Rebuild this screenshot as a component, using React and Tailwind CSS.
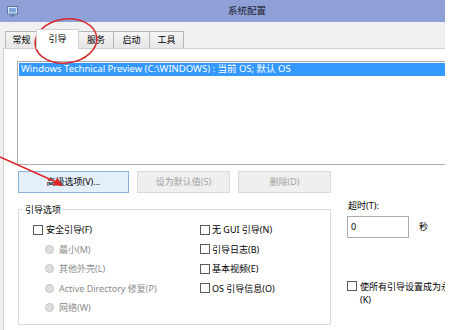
import React from "react";

const F = { fontFamily: '"Noto Sans", "Noto Sans CJK SC", sans-serif' };

function Check({ className = "" }) {
  return <div className={"w-[10px] h-[10px] border border-[#5a5a5a] bg-white shrink-0 " + className} />;
}

function Radio() {
  return <div className="w-[9px] h-[9px] rounded-full border border-[#c4c4c4] bg-[#dedede] shrink-0" />;
}

function Tab({ label, w, selected }) {
  if (selected) {
    return (
      <div
        className={`relative z-10 -mb-px h-[20px] ${w} bg-white border border-b-0 border-[#d0d0d0] flex items-start justify-center pt-[2px] text-[9px] text-black`}
      >
        {label}
      </div>
    );
  }
  return (
    <div
      className={`h-[17px] ${w} bg-gradient-to-b from-[#f5f5f5] to-[#e6e6e6] border border-b-0 border-[#b8b8b8] -ml-px flex items-center justify-center text-[9px] text-black`}
    >
      {label}
    </div>
  );
}

export default function App() {
  return (
    <div className="relative w-[450px] h-[330px] bg-white flex overflow-hidden" style={F}>
      <div className="w-[445px] h-full bg-[#f0f0f0] flex flex-col overflow-hidden shrink-0">
        {/* title bar */}
        <div className="h-[22px] bg-[#8fa0d7] flex items-center shrink-0">
          <svg width="11" height="11" viewBox="0 0 11 11" className="ml-[7px]">
            <rect x="0.5" y="0.5" width="10" height="7.5" fill="#dce8f6" stroke="#5f7aa8" />
            <rect x="2" y="2" width="7" height="4.5" fill="#7fa6d8" />
            <rect x="3.5" y="8.5" width="4" height="2" fill="#5f7aa8" />
          </svg>
          <div className="ml-[210px] text-[9.5px] text-[#1d1d2c]">系统配置</div>
        </div>
        {/* tabs */}
        <div className="h-[26px] flex items-end pl-[6px] shrink-0">
          <Tab label="常规" w="w-[33px]" />
          <Tab label="引导" w="w-[43px] -ml-[2px]" selected />
          <Tab label="服务" w="w-[36px] -ml-[1px]" />
          <Tab label="启动" w="w-[37px]" />
          <Tab label="工具" w="w-[35px]" />
        </div>
        {/* panel */}
        <div className="flex-1 bg-white border-t border-l border-[#d0d0d0] ml-[3px] pl-[13px] pt-[12px] text-[9px] text-black overflow-hidden">
          {/* list */}
          <div className="h-[104px] w-[440px] border border-[#a9abb0] bg-white pt-px pl-px">
            <div className="h-[13px] bg-[#3399ff] text-white text-[9.5px] flex items-center pl-[2px] whitespace-nowrap">
              Windows Technical Preview (C:\WINDOWS) : 当前 OS; 默认 OS
            </div>
          </div>
          {/* buttons */}
          <div className="flex mt-[6px] h-[22px]">
            <div className="w-[111px] ml-px border border-[#8db2da] bg-[#e4effa] flex items-center justify-center">
              高级选项(V)...
            </div>
            <div className="w-[93px] ml-[8px] border border-[#dadada] bg-[#efefef] text-[#a3a3a3] flex items-center justify-center">
              设为默认值(S)
            </div>
            <div className="w-[93px] ml-[8px] border border-[#dadada] bg-[#efefef] text-[#a3a3a3] flex items-center justify-center">
              删除(D)
            </div>
          </div>
          {/* lower area */}
          <div className="flex mt-[16px]">
            <div className="relative ml-px w-[313px] h-[116px] border border-[#dcdcdc] shrink-0">
              <div className="absolute -top-[7px] left-[4px] bg-white px-[2px] leading-[13px]">引导选项</div>
              <div className="flex pt-[10px]">
                <div className="pl-[14px] w-[181px]">
                  <div className="h-[19.5px] flex items-center gap-[3px]">
                    <Check />
                    <span>安全引导(F)</span>
                  </div>
                  {["最小(M)", "其他外壳(L)", "Active Directory 修复(P)", "网络(W)"].map((t) => (
                    <div key={t} className="h-[19.5px] flex items-center gap-[5px] pl-[12px] text-[#8c8c8c]">
                      <Radio />
                      <span>{t}</span>
                    </div>
                  ))}
                </div>
                <div>
                  {["无 GUI 引导(N)", "引导日志(B)", "基本视频(E)", "OS 引导信息(O)"].map((t) => (
                    <div key={t} className="h-[19.5px] flex items-center gap-[2px]">
                      <Check />
                      <span>{t}</span>
                    </div>
                  ))}
                </div>
              </div>
            </div>
            <div className="ml-[16px] -mt-[9px] flex flex-col shrink-0">
              <div className="pl-px leading-[12px]">超时(T):</div>
              <div className="flex items-center mt-[4px]">
                <div className="w-[62px] h-[22px] border border-[#a9abb0] bg-white flex items-center pl-[3px]">0</div>
                <span className="ml-[10px]">秒</span>
              </div>
              <div className="flex mt-[42px] gap-[3px]">
                <Check className="mt-px" />
                <div className="leading-[13px] whitespace-nowrap">
                  使所有引导设置成为永久
                  <br />
                  (K)
                </div>
              </div>
            </div>
          </div>
        </div>
      </div>
      {/* annotations */}
      <svg className="absolute left-0 top-0 pointer-events-none" width="450" height="330">
        <ellipse cx="66" cy="41" rx="31" ry="22" fill="none" stroke="#d8262b" strokeWidth="1.5" transform="rotate(-8 66 41)" />
        <line x1="0" y1="157" x2="56" y2="182" stroke="#e02424" strokeWidth="1.5" />
        <polygon points="63,186 53,185 57,178" fill="#e02424" />
      </svg>
    </div>
  );
}
